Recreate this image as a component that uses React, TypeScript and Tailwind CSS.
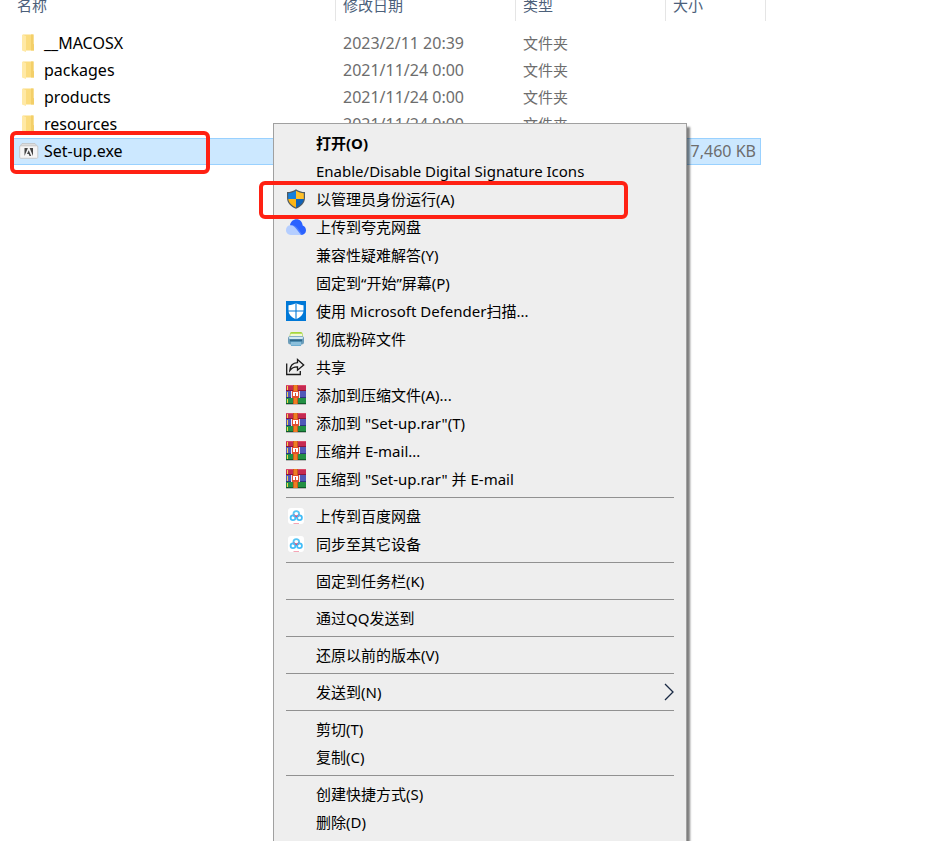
import { Fragment, type ReactNode } from "react";
import clsx from "clsx";

function FolderIcon() {
  return (
    <svg width="20" height="20" viewBox="0 0 20 20" aria-hidden="true">
      <path d="M4 .5h10.500v9.500l.5.500v6H4z" fill="#fbdc7f" />
      <path d="M12 .5h2.500v9.500l.5.500v6h-3z" fill="#f3cf69" />
      <path d="M3 .5l4 1.500V18L3 16.500z" fill="#ffe9a6" />
    </svg>
  );
}

function SetupIcon() {
  return (
    <svg width="20" height="20" viewBox="0 0 20 20" aria-hidden="true">
      <path d="M3 1.500h13l2.500 3H.8z" fill="#dedede" stroke="#bdbdbd" strokeWidth=".7" />
      <rect x=".7" y="3.800" width="18.100" height="12.500" rx="1" fill="#f5f5f5" stroke="#c4c4c4" strokeWidth=".9" />
      <path d="M5.500 6h3.400L5.500 14zM14 6h-3.400L14 14zM9.700 8.300l2.500 5.700h-1.700l-.8-1.900H8z" fill="#454545" />
    </svg>
  );
}

function ShieldIcon() {
  return (
    <svg width="20" height="20" viewBox="0 0 20 20" aria-hidden="true">
      <path d="M10 .2C7.300 2.100 4.400 3 1 3.100V9c0 5.200 4 8.600 9 10.800 5-2.200 9-5.600 9-10.800V3.100C15.600 3 12.700 2.100 10 .2z" fill="#4f5b63" />
      <path d="M10 1.700C7.500 3.300 5 4 2.200 4.200V10H10z" fill="#1580dc" />
      <path d="M10 1.700c2.500 1.600 5 2.300 7.800 2.500V10H10z" fill="#ffc029" />
      <path d="M2.300 10H10v8.500C6 16.700 2.800 14 2.300 10z" fill="#fdb515" />
      <path d="M17.700 10H10v8.500c4-1.800 7.200-4.500 7.700-8.500z" fill="#0f62ba" />
    </svg>
  );
}

function QuarkIcon() {
  return (
    <svg width="20" height="20" viewBox="0 0 20 20" aria-hidden="true">
      <path d="M4 8.200C4.700 4.600 7.300 2.300 10.500 2.300c3.600 0 5.800 2.700 6.200 6.300 2 .7 3.300 2.500 3.300 4.700 0 2.800-1.900 4.600-4.500 4.600H14z" fill="#2b62ff" />
      <path d="M4 8.200c3.700-.9 6.500 1.400 8.700 4.400l3.900 5.300H10z" fill="#4b7dff" />
      <path d="M0 13c0-2.800 2-4.800 4.500-4.800 2.800 0 4.500 2 6.500 4.500l4 5.200H4.700C2 17.900 0 15.700 0 13z" fill="#b5ceff" />
    </svg>
  );
}

function DefenderIcon() {
  return (
    <svg width="20" height="20" viewBox="0 0 20 20" aria-hidden="true">
      <rect width="20" height="20" fill="#0078d7" />
      <path d="M10 2C7.800 3.500 5.500 4.100 2.500 4.200V9.500c0 4 3.200 6.900 7.500 8.700 4.300-1.800 7.500-4.700 7.500-8.700V4.200C14.500 4.100 12.200 3.500 10 2z" fill="#fff" />
      <path d="M10 1.500v17M2 10h16" stroke="#0078d7" strokeWidth="1.100" />
    </svg>
  );
}

function ShredderIcon() {
  return (
    <svg width="20" height="20" viewBox="0 0 20 20" aria-hidden="true">
      <path d="M4 4.500q0-1.500 1.500-1.500h9.500q1.500 0 1.500 1.500l.5 3H3.500z" fill="#a5d63c" />
      <path d="M4.500 4.800h11.500l.3 2.200H4.200z" fill="#f3f9d2" />
      <rect x="2" y="7" width="16" height="8.500" rx="2.500" fill="#6c9db9" />
      <rect x="3" y="7.800" width="14" height="2.200" rx="1" fill="#d3e8f2" />
      <rect x="4" y="10.500" width="12" height="2" fill="#2d678a" />
      <path d="M4.500 12.500h11l-.5 4.500H5z" fill="#4f9cc6" />
      <path d="M6 13v3.500M8 13v3.500M10 13v3.500M12 13v3.500M14 13v3.500" stroke="#e6f5fc" strokeWidth=".8" />
    </svg>
  );
}

function ShareIcon() {
  return (
    <svg width="20" height="20" viewBox="0 0 20 20" fill="none" stroke="#1a1a1a" strokeWidth="1.300" aria-hidden="true">
      <path d="M.7 6.500v11h13.600v-3.500" />
      <path d="M11.500 2.500v3.200C7 6 4.200 8.800 3.800 13.500c2-2.700 4.400-3.700 7.700-3.600v3.300L17.700 8z" />
    </svg>
  );
}

function RarIcon() {
  return (
    <svg width="20" height="20" viewBox="0 0 20 20" shapeRendering="crispEdges" aria-hidden="true">
      <rect width="20" height="6" fill="#c52a52" />
      <rect width="20" height="1" fill="#dc4a68" />
      <rect y="5" width="20" height="1" fill="#8c1538" />
      <rect y="6" width="20" height="6" fill="#5158b8" />
      <rect y="12" width="20" height="1" fill="#2e347f" />
      <rect y="13" width="20" height="5" fill="#239044" />
      <rect y="18" width="20" height="1" fill="#0f5c29" />
      <rect y="19" width="20" height="1" fill="#b7b7b7" />
      <path d="M1 1h1v4H1zM1 7h1v5H1zM1 14h1v4H1z" fill="#f2d34b" />
      <rect x="7" width="5" height="19" fill="#ef7d22" />
      <path d="M7 0h1v6H7zM11 0h1v6h-1zM7 13h1v6H7zM11 13h1v6h-1z" fill="#c9591a" />
      <path d="M5 6h1v7H5zM13 6h1v7h-1z" fill="#e4e4ee" />
      <rect x="6" y="6" width="7" height="7" fill="#e2502f" />
      <path d="M7 7h5v4h-2V8H9v3H7z" fill="#fff" />
    </svg>
  );
}

function BaiduIcon() {
  return (
    <svg width="20" height="20" viewBox="0 0 20 20" aria-hidden="true">
      <rect x="2" y="2" width="16" height="16" rx="3" fill="#fff" />
      <g fill="none" strokeWidth="1.800">
        <circle cx="10.300" cy="8" r="2.800" stroke="#58c6f5" />
        <path d="M7.600 8.500a2.800 2.800 0 0 0 5.400 0" stroke="#ef5478" />
        <circle cx="7" cy="11.800" r="2.400" stroke="#42bdf8" />
        <circle cx="13.500" cy="11.800" r="2.400" stroke="#42bdf8" />
      </g>
      <path d="M8.500 9.500h3.500l-1.700 1.800z" fill="#ef4468" />
      <path d="M7.500 17h5.500v1H7.500z" fill="#f5a5b5" />
    </svg>
  );
}

type FileRow = {
  name: string;
  date: string;
  type: string;
  size?: string;
  selected?: boolean;
};

const FILES: FileRow[] = [
  { name: "__MACOSX", date: "2023/2/11 20:39", type: "文件夹" },
  { name: "packages", date: "2021/11/24 0:00", type: "文件夹" },
  { name: "products", date: "2021/11/24 0:00", type: "文件夹" },
  { name: "resources", date: "2021/11/24 0:00", type: "文件夹" },
  { name: "Set-up.exe", date: "", type: "", size: "7,460 KB", selected: true },
];

type MenuItem = {
  label: string;
  icon?: ReactNode;
  bold?: boolean;
  marked?: boolean;
  submenu?: boolean;
};

const MENU_GROUPS: MenuItem[][] = [
  [
    { label: "打开(O)", bold: true },
    { label: "Enable/Disable Digital Signature Icons" },
    { label: "以管理员身份运行(A)", icon: <ShieldIcon />, marked: true },
    { label: "上传到夸克网盘", icon: <QuarkIcon /> },
    { label: "兼容性疑难解答(Y)" },
    { label: "固定到“开始”屏幕(P)" },
    { label: "使用 Microsoft Defender扫描...", icon: <DefenderIcon /> },
    { label: "彻底粉碎文件", icon: <ShredderIcon /> },
    { label: "共享", icon: <ShareIcon /> },
    { label: "添加到压缩文件(A)...", icon: <RarIcon /> },
    { label: '添加到 "Set-up.rar"(T)', icon: <RarIcon /> },
    { label: "压缩并 E-mail...", icon: <RarIcon /> },
    { label: '压缩到 "Set-up.rar" 并 E-mail', icon: <RarIcon /> },
  ],
  [
    { label: "上传到百度网盘", icon: <BaiduIcon /> },
    { label: "同步至其它设备", icon: <BaiduIcon /> },
  ],
  [{ label: "固定到任务栏(K)" }],
  [{ label: "通过QQ发送到" }],
  [{ label: "还原以前的版本(V)" }],
  [{ label: "发送到(N)", submenu: true }],
  [{ label: "剪切(T)" }, { label: "复制(C)" }],
  [{ label: "创建快捷方式(S)" }, { label: "删除(D)" }],
];

function FileTable() {
  return (
    <table className="ml-[13px] w-[753px] table-fixed border-separate border-spacing-0 text-left">
      <colgroup>
        <col />
        <col className="w-[180px]" />
        <col className="w-[150px]" />
        <col className="w-[95px]" />
        <col className="w-[5px]" />
      </colgroup>
      <thead className="leading-[10px] text-[#4c607a]">
        <tr className="h-[21px] align-top">
          <th className="border-r border-[#e5e5e5] pl-1 font-normal">名称</th>
          <th className="border-r border-[#e5e5e5] pl-[7px] font-normal">修改日期</th>
          <th className="border-r border-[#e5e5e5] pl-[7px] font-normal">类型</th>
          <th colSpan={2} className="border-r border-[#e5e5e5] pl-[7px] font-normal">大小</th>
        </tr>
      </thead>
      <tbody className="text-[#6d6d6d]">
        <tr className="h-[9px]">
          <td colSpan={5} className="p-0" />
        </tr>
        {FILES.map((file) => {
          const cell = clsx(
            "border-y py-0",
            file.selected ? "border-[#99d1ff] bg-[#cce8ff]" : "border-transparent"
          );
          return (
            <tr key={file.name} className="h-[27px]">
              <td className={clsx(cell, "relative pl-[6px] text-base/[25px] text-black")}>
                <div className="flex items-center gap-[5px]">
                  {file.selected ? <SetupIcon /> : <FolderIcon />}
                  <span>{file.name}</span>
                </div>
                {file.selected && (
                  <span className="pointer-events-none absolute -top-2 -left-[3px] h-[43px] w-[200px] rounded-md border-4 border-[#ff2113]" />
                )}
              </td>
              <td className={clsx(cell, "pl-[7px] text-base/[25px]")}>{file.date}</td>
              <td className={clsx(cell, "pl-[7px] leading-[25px]")}>{file.type}</td>
              <td className={clsx(cell, "pr-1 text-right text-base/[25px]", file.selected && "border-r")}>
                {file.size}
              </td>
              <td className="p-0" />
            </tr>
          );
        })}
      </tbody>
    </table>
  );
}

function ContextMenu() {
  return (
    <div
      role="menu"
      className="absolute top-[123px] left-[273px] min-h-[calc(100vh-123px)] w-[414px] border border-b-0 border-[#a0a0a0] bg-[#eeeeee] pt-[5px] text-black shadow-[3px_4px_2px_rgba(0,0,0,0.5)]"
    >
      {MENU_GROUPS.map((group, i) => (
        <Fragment key={i}>
          {i > 0 && <div role="separator" className="mx-3 my-1 h-px bg-[#919191]" />}
          {group.map((item) => (
            <button
              key={item.label}
              type="button"
              role="menuitem"
              className={clsx(
                "relative flex h-7 w-full items-center gap-[10px] px-3 text-left",
                item.bold && "font-bold",
                item.marked && "z-10"
              )}
            >
              <span className="h-5 w-5 shrink-0">{item.icon}</span>
              <span className="flex-1 whitespace-nowrap">{item.label}</span>
              {item.submenu && (
                <svg width="10" height="18" viewBox="0 0 10 18" fill="none" stroke="#1a2a44" strokeWidth="1.300" aria-hidden="true">
                  <path d="M1 1l8 8-8 8" />
                </svg>
              )}
              {item.marked && (
                <span className="pointer-events-none absolute -top-1 -left-[15px] h-[38px] w-[369px] rounded-md border-4 border-[#ff2113]" />
              )}
            </button>
          ))}
        </Fragment>
      ))}
    </div>
  );
}

export default function App() {
  return (
    <main className="relative min-h-screen overflow-hidden bg-white font-['Noto_Sans','Noto_Sans_CJK_SC',sans-serif] text-[15px]">
      <FileTable />
      <ContextMenu />
    </main>
  );
}
